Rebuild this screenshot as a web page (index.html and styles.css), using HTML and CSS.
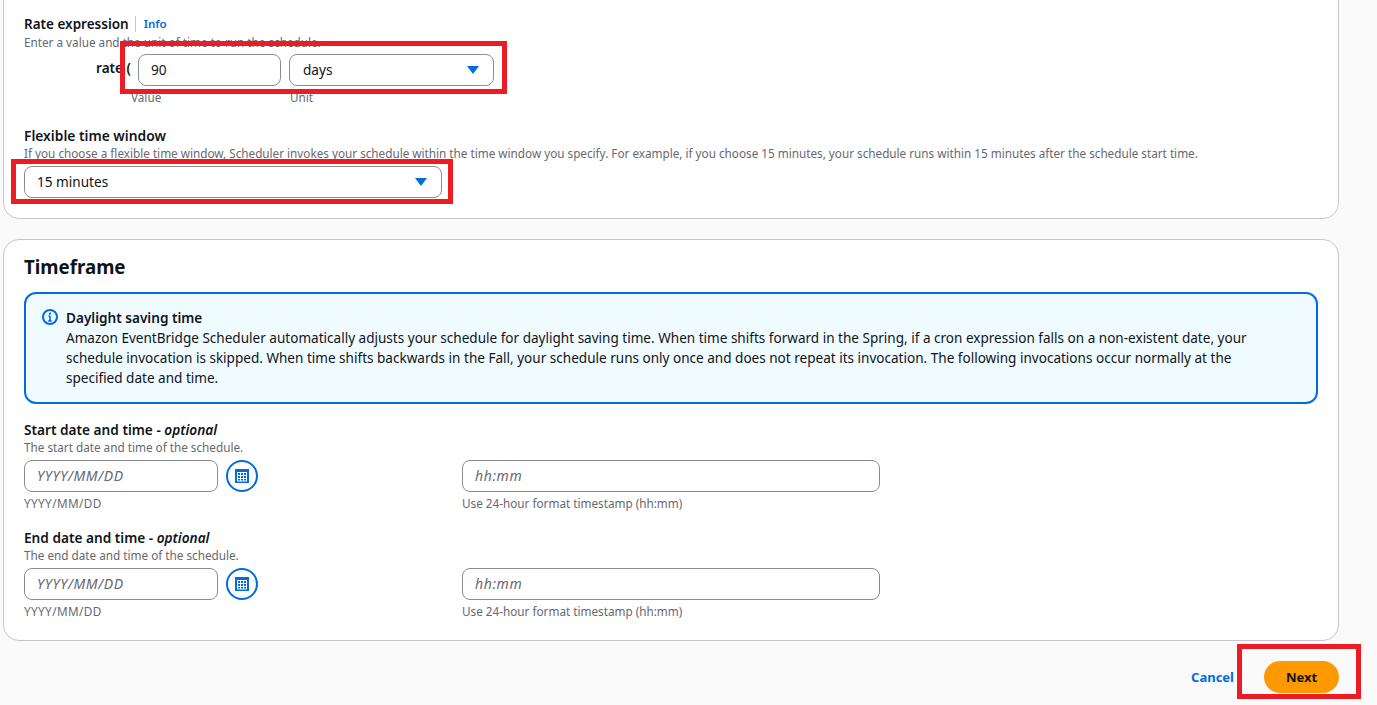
FILE: index.html
```html
<!DOCTYPE html>
<html lang="en">
<head>
<meta charset="utf-8">
<title>Schedule</title>
<link rel="stylesheet" href="styles.css">
</head>
<body>
<main class="page">
  <section class="card card-top">
    <div class="label-row"><span class="label">Rate expression</span><a class="info">Info</a></div>
    <p class="hint">Enter a value and the unit of time to run the schedule.</p>
    <div class="rate-row">
      <span class="rate-word">rate (</span>
      <div class="rate-field value-field">
        <div class="control"><span class="control-text">90</span></div>
        <span class="hint sub">Value</span>
      </div>
      <div class="rate-field unit-field">
        <div class="control"><span class="control-text">days</span><svg class="caret" viewBox="0 0 12 8"><path d="M0 0h12L6 8z"/></svg></div>
        <span class="hint sub">Unit</span>
      </div>
    </div>
    <div class="label-row flex-label"><span class="label">Flexible time window</span></div>
    <p class="hint flex-hint">If you choose a flexible time window, Scheduler invokes your schedule within the time window you specify. For example, if you choose 15 minutes, your schedule runs within 15 minutes after the schedule start time.</p>
    <div class="control window-select"><span class="control-text">15 minutes</span><svg class="caret" viewBox="0 0 12 8"><path d="M0 0h12L6 8z"/></svg></div>
  </section>

  <section class="card card-bottom">
    <h2 class="card-title">Timeframe</h2>
    <div class="alert">
      <svg class="alert-icon" viewBox="0 0 16 16"><circle cx="8" cy="8" r="7" fill="none" stroke="#006ce0" stroke-width="2"/><path d="M8 7v5M6.200 12h3.600M6.500 7H8" fill="none" stroke="#006ce0" stroke-width="1.600"/><rect x="7" y="3.600" width="2" height="2" fill="#006ce0"/></svg>
      <div class="alert-body">
        <div class="label">Daylight saving time</div>
        <div class="alert-text">Amazon EventBridge Scheduler automatically adjusts your schedule for daylight saving time. When time shifts forward in the Spring, if a cron expression falls on a non-existent date, your schedule invocation is skipped. When time shifts backwards in the Fall, your schedule runs only once and does not repeat its invocation. The following invocations occur normally at the specified date and time.</div>
      </div>
    </div>

    <div class="datetime">
      <div class="label">Start date and time - <em>optional</em></div>
      <p class="hint">The start date and time of the schedule.</p>
      <div class="dt-row">
        <div class="dt-date">
          <div class="date-line">
            <div class="control date-input"><span class="placeholder">YYYY/MM/DD</span></div>
            <span class="cal-btn"><svg viewBox="0 0 16 16"><path fill="#006ce0" fill-rule="evenodd" d="M1 1h14v14H1zM3 4v9.500h10V4z"/><path fill="#006ce0" d="M4 5h2v2H4zM7 5h2v2H7zM10 5h2v2h-2zM4 8h2v2H4zM7 8h2v2H7zM10 8h2v2h-2zM4 11h2v1.500H4zM7 11h2v1.500H7zM10 11h2v1.500h-2z"/></svg></span>
          </div>
          <span class="hint sub date-format">YYYY/MM/DD</span>
        </div>
        <div class="dt-time">
          <div class="control time-input"><span class="placeholder">hh:mm</span></div>
          <span class="hint sub">Use 24-hour format timestamp (hh:mm)</span>
        </div>
      </div>
    </div>

    <div class="datetime datetime-end">
      <div class="label">End date and time - <em>optional</em></div>
      <p class="hint">The end date and time of the schedule.</p>
      <div class="dt-row">
        <div class="dt-date">
          <div class="date-line">
            <div class="control date-input"><span class="placeholder">YYYY/MM/DD</span></div>
            <span class="cal-btn"><svg viewBox="0 0 16 16"><path fill="#006ce0" fill-rule="evenodd" d="M1 1h14v14H1zM3 4v9.500h10V4z"/><path fill="#006ce0" d="M4 5h2v2H4zM7 5h2v2H7zM10 5h2v2h-2zM4 8h2v2H4zM7 8h2v2H7zM10 8h2v2h-2zM4 11h2v1.500H4zM7 11h2v1.500H7zM10 11h2v1.500h-2z"/></svg></span>
          </div>
          <span class="hint sub date-format">YYYY/MM/DD</span>
        </div>
        <div class="dt-time">
          <div class="control time-input"><span class="placeholder">hh:mm</span></div>
          <span class="hint sub">Use 24-hour format timestamp (hh:mm)</span>
        </div>
      </div>
    </div>
  </section>

  <footer class="actions">
    <a class="cancel">Cancel</a>
    <span class="next">Next</span>
  </footer>
</main>

<div class="mark mark-rate"></div>
<div class="mark mark-window"></div>
<div class="mark mark-next"></div>
</body>
</html>
```

FILE: styles.css
```css
* { box-sizing: border-box; }
html, body { margin: 0; height: 705px; overflow: hidden; }
body {
  background: #fafafa;
  font-family: "Noto Sans", sans-serif;
  font-size: 14px;
  line-height: 20px;
  color: #0f141a;
  position: relative;
}
.page { padding-left: 3px; width: 1339px; }
.card {
  background: #fff;
  border: 1px solid #c6c6cd;
  border-radius: 16px;
  padding: 0 20px;
}
.card-top {
  margin-top: -20px;
  height: 239px;
  padding-top: 33px;
  border-top-left-radius: 0;
  border-top-right-radius: 0;
}
.card-bottom { margin-top: 20px; height: 402px; padding-top: 16px; }
.label-row { display: flex; align-items: center; height: 20px; }
.label { font-weight: 600; font-size: 13.500px; line-height: 18px; }
.info {
  color: #006ce0;
  font-weight: 600;
  font-size: 11.500px;
  margin-left: 6px;
  padding-left: 8px;
  border-left: 1px solid #c6c6cd;
  line-height: 16px;
}
.hint { margin: 0; font-size: 11.720px; line-height: 16px; color: #656871; }
.sub { display: block; }
.rate-row { display: flex; margin-top: 4px; height: 58px; }
.rate-word { font-weight: 600; font-size: 13.600px; margin-left: 72px; width: 42px; padding-top: 4px; }
.rate-field { display: flex; flex-direction: column; }
.value-field { width: 143px; margin-right: 8px; }
.unit-field { width: 205px; }
.rate-field .sub { margin-top: 3px; margin-left: -7px; }
.unit-field.rate-field .sub { margin-left: 1px; }
.control {
  display: flex;
  align-items: center;
  justify-content: space-between;
  height: 32px;
  background: #fff;
  border: 1px solid #8c8c94;
  border-radius: 8px;
  padding: 0 12px;
}
.unit-field .control { padding-left: 13px; }
.control-text { font-size: 13.600px; }
.caret { width: 12px; height: 8px; fill: #006ce0; flex: none; margin-right: 2px; }
.flex-label { margin-top: 14px; }
.flex-label .label { font-size: 13.800px; }
.flex-hint { margin-top: -1px; }
.window-select { width: 418px; margin-top: 5px; }
.card-title { margin: 0; font-size: 18.700px; line-height: 22px; font-weight: 700; }
.alert {
  display: flex;
  margin-top: 14px;
  height: 112px;
  background: #f0fbff;
  border: 2px solid #006ce0;
  border-radius: 12px;
  padding: 15px 16px;
}
.alert-icon { width: 16px; height: 16px; flex: none; margin: 0 8px 0 0; }
.alert-body { padding-right: 20px; }
.alert-body .label { font-size: 13.600px; }
.label + .alert-text { margin-top: 1px; }
.alert-text { font-size: 13.550px; line-height: 20px; }
.datetime { margin-top: 17px; }
.datetime-end { margin-top: 18px; }
.datetime .label { font-size: 13.650px; }
.dt-row { display: flex; margin-top: 5px; }
.dt-date { width: 438px; }
.date-line { display: flex; align-items: center; gap: 8px; }
.date-input { width: 194px; }
.time-input { width: 418px; }
.placeholder { font-style: italic; font-size: 14px; letter-spacing: 0.600px; color: #656871; }
.date-format { letter-spacing: 0.400px; }
.cal-btn {
  width: 32px;
  height: 32px;
  border: 2px solid #006ce0;
  border-radius: 50%;
  display: flex;
  align-items: center;
  justify-content: center;
}
.cal-btn svg { width: 16px; height: 16px; }
.dt-row .sub { margin-top: 3px; }
.actions {
  display: flex;
  justify-content: flex-end;
  align-items: center;
  gap: 30px;
  margin-top: 20px;
}
.cancel { color: #006ce0; font-weight: 700; font-size: 13px; }
.next {
  width: 75px;
  height: 32px;
  border-radius: 16px;
  background: #ff9900;
  font-weight: 700;
  font-size: 13px;
  display: flex;
  align-items: center;
  justify-content: center;
}
.mark { position: absolute; border: 5px solid #ed1c24; }
.mark-rate { left: 120px; top: 41px; width: 387px; height: 53px; }
.mark-window { left: 11px; top: 159px; width: 442px; height: 45px; }
.mark-next { left: 1237px; top: 644px; width: 124px; height: 55px; }
```
